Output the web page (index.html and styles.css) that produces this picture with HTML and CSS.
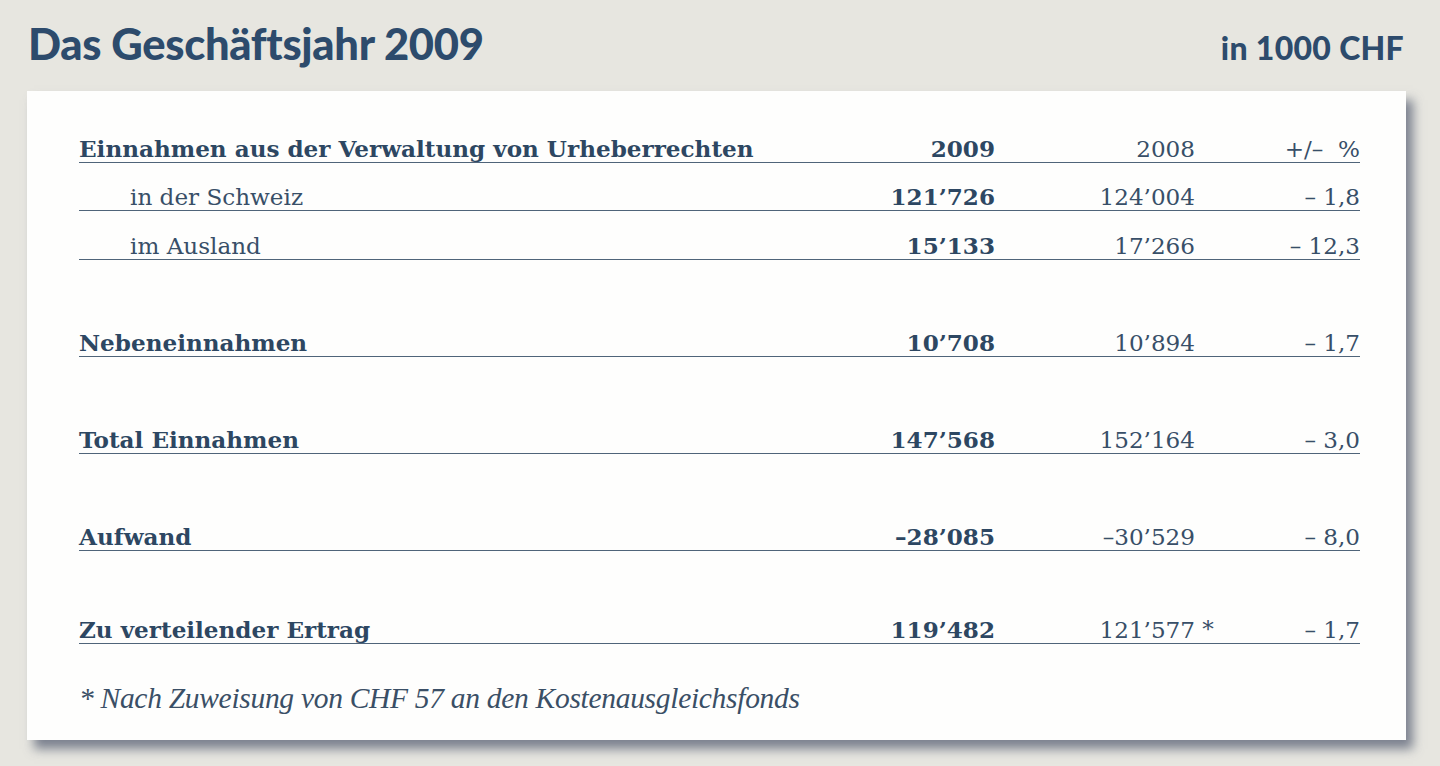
FILE: index.html
```html
<!DOCTYPE html>
<html lang="de">
<head>
<meta charset="utf-8">
<title>Das Geschäftsjahr 2009</title>
<link rel="stylesheet" href="styles.css">
</head>
<body>
<header class="top">
  <h1 class="title">Das Geschäftsjahr 2009</h1>
  <div class="unit">in 1000 CHF</div>
</header>
<main class="card">
  <div class="table">
    <div class="row head">
      <span class="label b">Einnahmen aus der Verwaltung von Urheberrechten</span>
      <span class="num b">2009</span>
      <span class="num">2008</span>
      <span class="num">+/–&nbsp;&nbsp;%</span>
    </div>
    <div class="row">
      <span class="label sub">in der Schweiz</span>
      <span class="num b">121’726</span>
      <span class="num">124’004</span>
      <span class="num">– 1,8</span>
    </div>
    <div class="row">
      <span class="label sub">im Ausland</span>
      <span class="num b">15’133</span>
      <span class="num">17’266</span>
      <span class="num">– 12,3</span>
    </div>
    <div class="spacer"></div>
    <div class="row">
      <span class="label b">Nebeneinnahmen</span>
      <span class="num b">10’708</span>
      <span class="num">10’894</span>
      <span class="num">– 1,7</span>
    </div>
    <div class="spacer"></div>
    <div class="row">
      <span class="label b">Total Einnahmen</span>
      <span class="num b">147’568</span>
      <span class="num">152’164</span>
      <span class="num">– 3,0</span>
    </div>
    <div class="spacer"></div>
    <div class="row">
      <span class="label b">Aufwand</span>
      <span class="num b">–28’085</span>
      <span class="num">–30’529</span>
      <span class="num">– 8,0</span>
    </div>
    <div class="spacer"></div>
    <div class="row last">
      <span class="label b">Zu verteilender Ertrag</span>
      <span class="num b">119’482</span>
      <span class="num"><span class="star-wrap">121’577<span class="star">&nbsp;*</span></span></span>
      <span class="num">– 1,7</span>
    </div>
  </div>
  <p class="note">* Nach Zuweisung von CHF 57 an den Kostenausgleichsfonds</p>
</main>
</body>
</html>
```

FILE: styles.css
```css
html, body {
  margin: 0;
  padding: 0;
}
body {
  background: #e7e6e0;
  width: 1440px;
  height: 766px;
  overflow: hidden;
  color: #2d4864;
}
.top {
  display: flex;
  justify-content: space-between;
  align-items: baseline;
  padding: 20px 36px 0 28px;
  height: 69px;
  box-sizing: border-box;
}
.title {
  margin: 0;
  font-family: Lato, "Open Sans", sans-serif;
  font-weight: 900;
  font-size: 43.5px;
  line-height: 46px;
  color: #2d4b6c;
  letter-spacing: -0.3px;
}
.unit {
  font-family: Lato, "Open Sans", sans-serif;
  font-weight: 900;
  font-size: 32px;
  color: #2d4b6c;
  letter-spacing: 0.3px;
}
.card {
  margin: 22px 0 0 27px;
  width: 1379px;
  height: 649px;
  box-sizing: border-box;
  background: #fefefd;
  box-shadow: 7px 9px 10px rgba(88, 96, 116, 0.75);
  padding: 23px 46px 0 52px;
}
.table {
  font-family: "DejaVu Serif", serif;
  font-size: 23.1px;
  color: #384f68;
}
.row {
  display: grid;
  grid-template-columns: 1fr 140px 200px 165px;
  align-items: end;
  height: 48.5px;
  box-sizing: border-box;
  border-bottom: 1.5px solid #4f6479;
  line-height: 24px;
  padding-bottom: 1px;
}
.row.last {
  height: 45px;
}
.spacer {
  height: 48.5px;
}
.label {
  white-space: nowrap;
}
.sub {
  padding-left: 51px;
  font-weight: 400;
}
.b {
  font-weight: 700;
  color: #2d4762;
}
.num {
  text-align: right;
  white-space: nowrap;
}
.star-wrap {
  position: relative;
}
.star {
  position: absolute;
  left: 100%;
  top: 0;
}
.note {
  margin: 38px 0 0 0;
  font-family: "Liberation Serif", serif;
  font-style: italic;
  font-size: 29.5px;
  line-height: 32px;
  color: #3a4f66;
  letter-spacing: -0.3px;
}
```
